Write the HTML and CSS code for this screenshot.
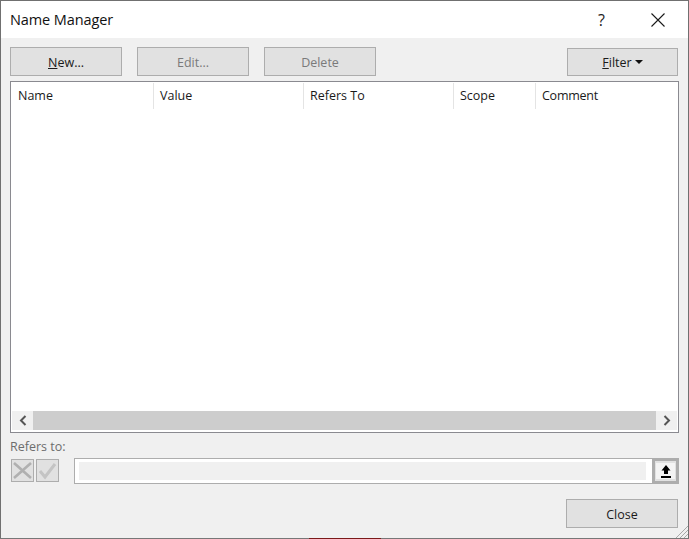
FILE: index.html
```html
<!DOCTYPE html>
<html lang="en">
<head>
<meta charset="utf-8">
<title>Name Manager</title>
<link rel="stylesheet" href="styles.css">
</head>
<body>
<div class="dialog">
  <header class="titlebar">
    <h1 class="title">Name Manager</h1>
    <span class="help">?</span>
    <svg class="close-x" width="14" height="14" viewBox="0 0 14 14"><path d="M.5.5l13 13M13.500.5l-13 13" stroke="#1a1a1a" stroke-width="1.100" fill="none"/></svg>
  </header>
  <main class="body">
    <div class="toolbar">
      <button class="btn"><span><u>N</u>ew...</span></button>
      <button class="btn off">Edit...</button>
      <button class="btn off">Delete</button>
      <button class="btn filter"><span><u>F</u>ilter</span><i class="caret"></i></button>
    </div>
    <section class="list">
      <div class="cols">
        <div class="col">Name</div>
        <div class="col">Value</div>
        <div class="col">Refers To</div>
        <div class="col">Scope</div>
        <div class="col last">Comment</div>
      </div>
      <div class="rows"></div>
      <div class="scrollbar">
        <span class="arrow"><svg width="8" height="11" viewBox="0 0 8 11"><path d="M6.500 1L2 5.500l4.500 4.500" stroke="#555" stroke-width="2" fill="none"/></svg></span>
        <span class="thumb"></span>
        <span class="arrow"><svg width="8" height="11" viewBox="0 0 8 11"><path d="M1.500 1L6 5.500 1.500 10" stroke="#555" stroke-width="2" fill="none"/></svg></span>
      </div>
    </section>
    <div class="refers-label">Refers to:</div>
    <div class="refers">
      <span class="icon-btn"><svg width="21" height="21" viewBox="0 0 21 21"><path d="M2 3l17 15M19 3L2 18" stroke="#b0b0b0" stroke-width="2.600" fill="none"/></svg></span>
      <span class="icon-btn"><svg width="21" height="21" viewBox="0 0 21 21"><path d="M3 11l5 6L18 4" stroke="#c4c4c4" stroke-width="3" fill="none"/></svg></span>
      <div class="ref-input"><div class="ref-field"></div></div>
      <span class="collapse"><span class="collapse-face"><svg width="10" height="13" viewBox="0 0 10 13"><path d="M5 0l4.500 5.500H7V9H3V5.500H.5zM0 11h10v2H0z" fill="#000"/></svg></span></span>
    </div>
    <div class="footer"><button class="btn">Close</button></div>
    <svg class="grip" width="12" height="12" viewBox="0 0 12 12"><path d="M12 0L0 12M12 4l-8 8M12 8l-4 4" stroke="#a8a8a8" fill="none"/></svg>
  </main>
  <div class="edge"></div>
</div>
</body>
</html>
```

FILE: styles.css
```css
* { box-sizing: border-box; }
html, body { margin: 0; height: 100%; }
body { background: #777; overflow: hidden; }
.dialog {
  width: 689px; height: 539px;
  display: flex; flex-direction: column;
  border-top: 1px solid #707070;
  font-family: "Open Sans", "Noto Sans", sans-serif;
  font-size: 12.500px; color: #1a1a1a;
}
.titlebar {
  height: 37px; flex: none;
  background: #fff;
  border-left: 1px solid #707070;
  border-right: 1px solid #707070;
  display: flex; align-items: center;
  padding: 0 23px 0 9px;
}
.title { margin: 0; flex: 1; font-size: 14.500px; font-weight: 400; letter-spacing: -.1px; color: #111; }
.help { font-size: 16px; margin-right: 46px; color: #222; }
.body {
  position: relative;
  flex: 1; min-height: 0;
  background: #f0f0f0;
  border-left: 1px solid #707070;
  border-right: 1px solid #707070;
  padding: 9px 9px 0 9px;
}
.toolbar { display: flex; gap: 15px; height: 29px; }
.btn {
  width: 112px; height: 29px;
  background: #e1e1e1;
  border: 1px solid #adadad;
  font: inherit; color: #1a1a1a; padding: 1px 0 0;
  display: flex; align-items: center; justify-content: center;
}
.btn.off { color: #7a7a7a; }
.btn.filter { margin-left: auto; margin-right: 1px; width: 111px; height: 28px; margin-top: 1px; gap: 3px; padding-top: 0; }
.caret { width: 0; height: 0; border: 4px solid transparent; border-top: 4px solid #111; border-bottom: 0; }
.list {
  margin-top: 5px;
  width: 669px; height: 352px;
  background: #fff;
  border: 1px solid #8a8a90;
  display: flex; flex-direction: column;
}
.cols { display: grid; grid-template-columns: 143px 150px 150px 82px 1fr; height: 25px; margin-top: 1px; flex: none; }
.col { padding-left: 6px; border-right: 1px solid #e4e4e4; line-height: 26px; }
.col:first-child { padding-left: 7px; }
.col.last { border-right: 0; letter-spacing: -.25px; }
.rows { flex: 1; }
.scrollbar { height: 19px; margin: 0 1px 2px; display: flex; background: #f0f0f0; flex: none; }
.arrow { width: 21px; display: flex; align-items: center; justify-content: center; }
.thumb { flex: 1; background: #cdcdcd; }
.refers-label { margin-top: 5px; height: 20px; line-height: 18px; color: #6d6d6d; }
.refers { display: flex; align-items: flex-start; height: 26px; }
.icon-btn {
  width: 23px; height: 23px; margin: 1px 2px 0 1px; flex: none;
  background: #e1e1e1; border: 1px solid #adadad;
  display: block;
}
.icon-btn svg { display: block; margin: 0; }
.icon-btn + .icon-btn { margin-left: 0; margin-right: 15px; }
.ref-input {
  width: 578px; height: 26px; flex: none;
  background: #fff; border: 1px solid #adadad; border-right: 0;
  padding: 3px 6px 3px 4px;
}
.ref-field { height: 18px; background: #f0f0f0; }
.collapse {
  width: 27px; height: 26px; flex: none;
  border: 3px solid #adadad; background: #e1e1e1;
  padding: 2px 1px 2px 1px;
  display: flex;
}
.collapse-face { flex: 1; background: #f4f4f4; display: flex; align-items: center; justify-content: center; }
.collapse-face svg { display: block; }
.footer { display: flex; justify-content: flex-end; margin-top: 15px; padding-right: 1px; }
.grip { position: absolute; right: 0; bottom: 0; }
.edge {
  height: 1px; flex: none;
  background: linear-gradient(90deg, #777 0 309px, #7a1a1a 309px 381px, #777 381px);
}
```
